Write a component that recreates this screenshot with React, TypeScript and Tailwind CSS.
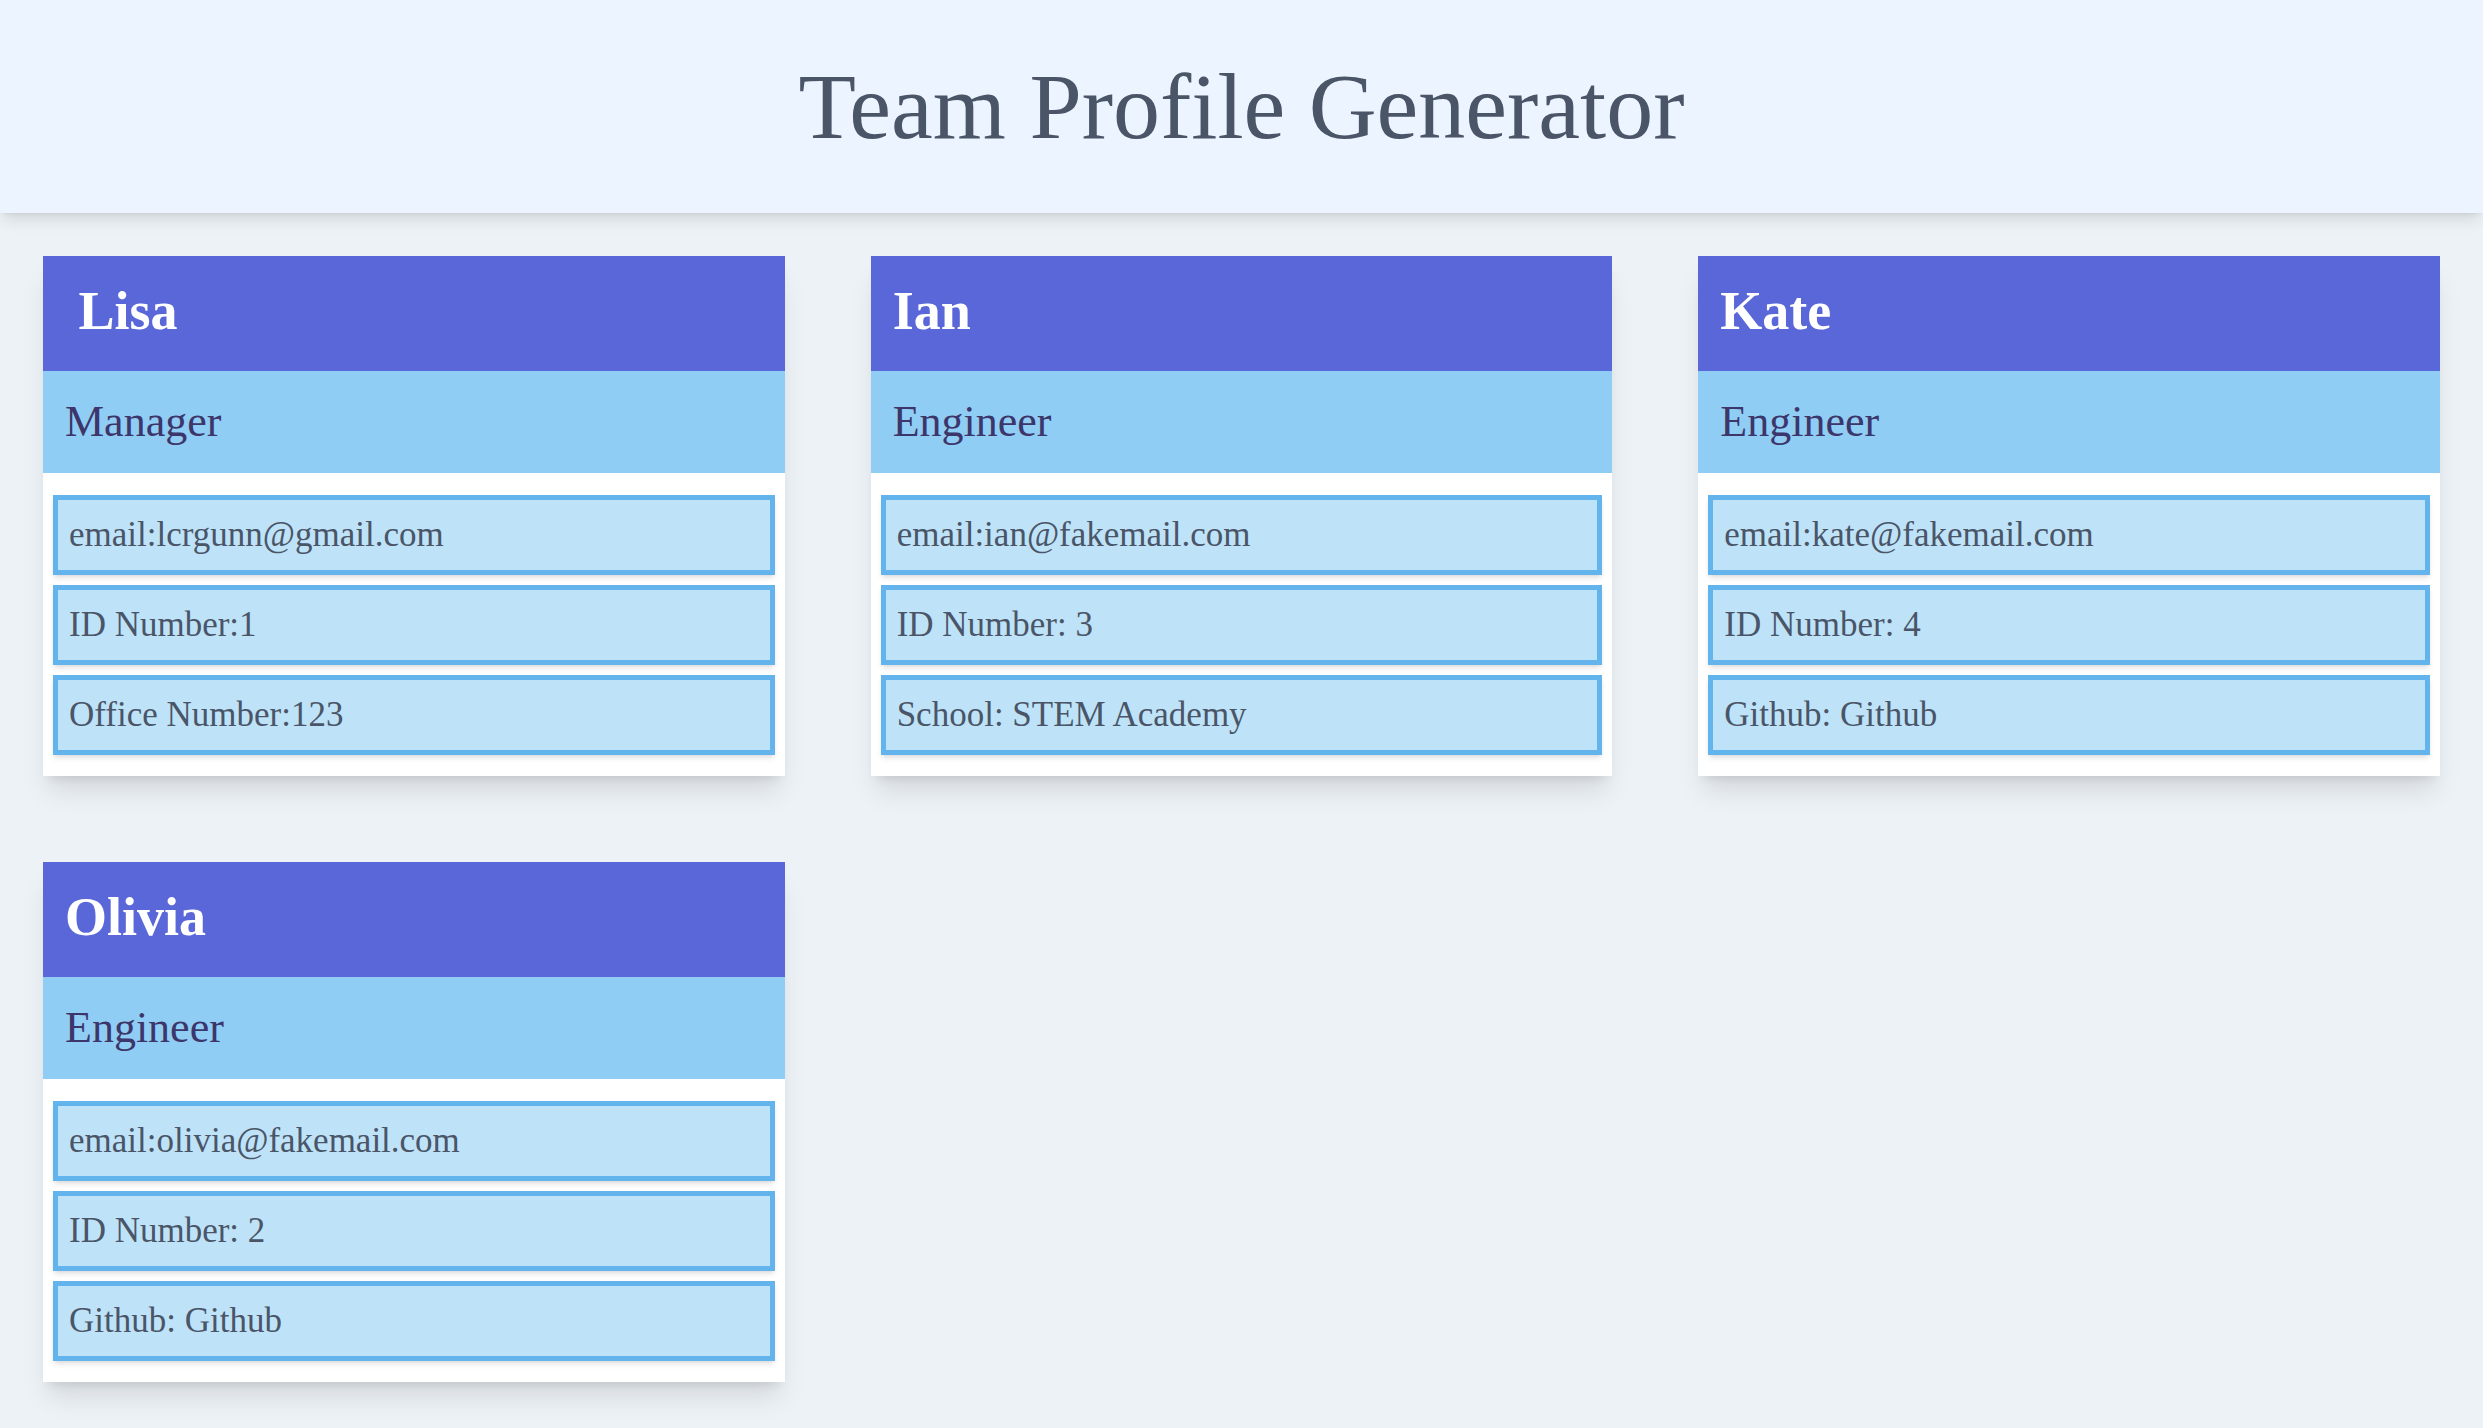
import React from 'react';

interface Member {
  name: string;
  role: string;
  email: string;
  idLine: string;
  extra: string;
}

const team: Member[] = [
  { name: '\u00a0Lisa', role: 'Manager', email: 'email:lcrgunn@gmail.com', idLine: 'ID Number:1', extra: 'Office Number:123' },
  { name: 'Ian', role: 'Engineer', email: 'email:ian@fakemail.com', idLine: 'ID Number: 3', extra: 'School: STEM Academy' },
  { name: 'Kate', role: 'Engineer', email: 'email:kate@fakemail.com', idLine: 'ID Number: 4', extra: 'Github: Github' },
  { name: 'Olivia', role: 'Engineer', email: 'email:olivia@fakemail.com', idLine: 'ID Number: 2', extra: 'Github: Github' },
];

const InfoRow: React.FC<{ text: string }> = ({ text }) => (
  <div className="h-[80px] flex items-center px-[11px] border-[5px] border-[#63b3ed] bg-[#bee3f8] text-[35px] text-[#4a5568] shadow-md">
    {text}
  </div>
);

const MemberCard: React.FC<{ member: Member }> = ({ member }) => {
  return (
    <div className="bg-white shadow-xl">
      <div className="h-[115px] flex items-center px-[22px] pb-[4px] bg-[#5a67d8] text-white text-[54px] font-bold">
        {member.name}
      </div>
      <div className="h-[102px] flex items-center px-[22px] bg-[#90cdf4] text-[#3c366b] text-[44px]">
        {member.role}
      </div>
      <div className="flex flex-col gap-[10px] px-[10px] pt-[22px] pb-[21px]">
        <InfoRow text={member.email} />
        <InfoRow text={member.idLine} />
        <InfoRow text={member.extra} />
      </div>
    </div>
  );
};

export default function App() {
  return (
    <div className="min-h-screen bg-[#edf2f7] font-['Liberation_Serif',serif]">
      <header className="h-[213px] flex items-center justify-center bg-[#ebf4ff] shadow-lg">
        <h1 className="text-[94px] text-[#4a5568]">Team Profile Generator</h1>
      </header>
      <main className="flex flex-wrap">
        {team.map((m) => (
          <div key={m.name} className="w-1/3 p-[43px]">
            <MemberCard member={m} />
          </div>
        ))}
      </main>
    </div>
  );
}
